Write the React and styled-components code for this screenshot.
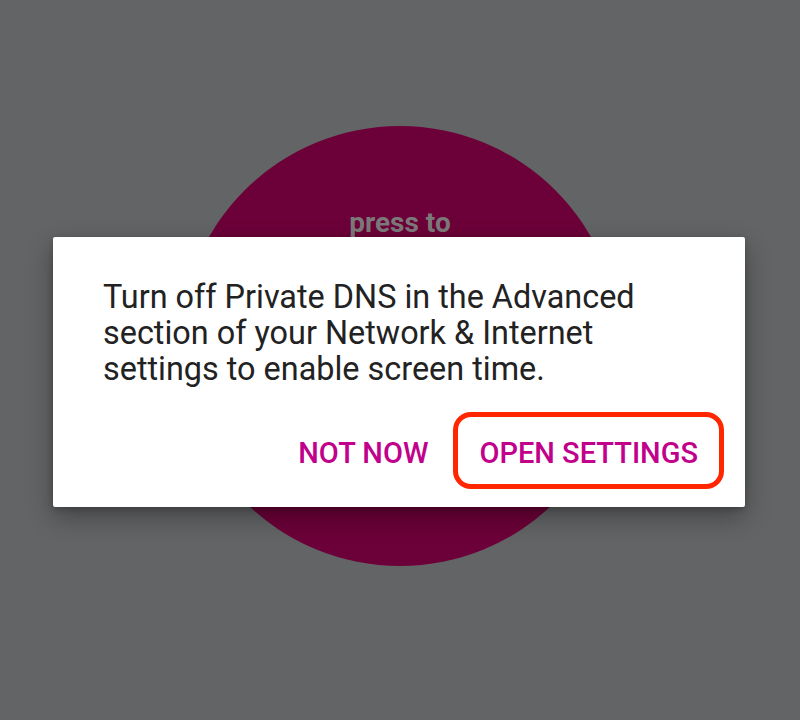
import React from 'react';
import styled, { createGlobalStyle } from 'styled-components';

const GlobalStyle = createGlobalStyle`
  html, body {
    margin: 0;
    padding: 0;
    background: #636466;
  }
  * {
    box-sizing: border-box;
  }
`;

const Screen = styled.div`
  display: grid;
  width: 800px;
  height: 720px;
  overflow: hidden;
  background: #636466;
  font-family: Roboto, "Noto Sans", sans-serif;
`;

const Circle = styled.div`
  grid-area: 1 / 1;
  align-self: start;
  justify-self: center;
  margin-top: 126px;
  width: 440px;
  height: 440px;
  border-radius: 50%;
  background: #6c0038;
  display: flex;
  flex-direction: column;
  align-items: center;
  padding-top: 80px;
`;

const CircleLabel = styled.div`
  color: #7c797b;
  font-size: 28px;
  font-weight: 700;
  line-height: 34px;
`;

const Dialog = styled.div`
  grid-area: 1 / 1;
  align-self: start;
  justify-self: start;
  margin-top: 237px;
  margin-left: 53px;
  width: 692px;
  height: 270px;
  background: #ffffff;
  border-radius: 2px;
  box-shadow: 0 10px 26px rgba(0, 0, 0, 0.32), 0 2px 6px rgba(0, 0, 0, 0.2);
  padding: 42px 21px 18px 50px;
  display: flex;
  flex-direction: column;
`;

const Message = styled.p`
  margin: 0;
  color: #222222;
  font-size: 32.4px;
  line-height: 36px;
  font-weight: 400;
  white-space: nowrap;
`;

const Actions = styled.div`
  display: flex;
  justify-content: flex-end;
  align-items: center;
  gap: 20px;
  margin-top: 25px;
`;

const ActionButton = styled.button`
  font-family: inherit;
  font-size: 29px;
  font-weight: 500;
  color: #c1008b;
  background: transparent;
  border: 5px solid ${props => (props.highlighted ? '#ff2600' : 'transparent')};
  border-radius: 18px;
  height: 77px;
  padding: 6px ${props => (props.highlighted ? '21px' : '0')} 0;
  text-transform: uppercase;
  cursor: pointer;
  line-height: 1;
`;

export default function App() {
  return (
    <>
      <GlobalStyle />
      <Screen>
        <Circle>
          <CircleLabel>press to</CircleLabel>
        </Circle>
        <Dialog>
          <Message>
            Turn off Private DNS in the Advanced
            <br />
            section of your Network &amp; Internet
            <br />
            settings to enable screen time.
          </Message>
          <Actions>
            <ActionButton>Not now</ActionButton>
            <ActionButton highlighted>Open settings</ActionButton>
          </Actions>
        </Dialog>
      </Screen>
    </>
  );
}
